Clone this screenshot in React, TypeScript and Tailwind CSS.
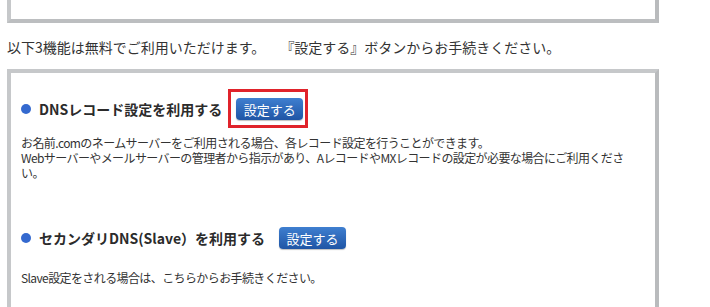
import React from 'react';

const font = { fontFamily: '"Noto Sans CJK JP", "Noto Sans", sans-serif' };

function SetupButton({ highlighted = false }: { highlighted?: boolean }) {
    return (
        <span className="relative inline-flex">
            <button
                type="button"
                className="h-[22px] w-[67px] rounded-[4px] bg-gradient-to-b from-[#3f7fd0] to-[#1f55a5] text-[13px] leading-none text-white shadow-[0_1px_1px_rgba(0,0,0,0.25)]"
            >
                設定する
            </button>
            {highlighted && (
                <span className="pointer-events-none absolute -left-[8px] -right-[5px] -top-[9px] -bottom-[8px] border-[3px] border-[#e0232b]" />
            )}
        </span>
    );
}

function FeatureHeading({ title, highlighted }: { title: string; highlighted?: boolean }) {
    return (
        <div className="flex items-center">
            <span className="h-[10px] w-[10px] shrink-0 rounded-full bg-[#3469cf]" />
            <h3 className="ml-[8px] mr-[14px] text-[14px] font-bold text-[#2b2b2b]">{title}</h3>
            <SetupButton highlighted={highlighted} />
        </div>
    );
}

export default function App() {
    return (
        <div className="h-[307px] w-[710px] overflow-hidden bg-white pl-[7px] text-[#333]" style={font}>
            {/* bottom of the previous panel */}
            <div className="-mt-[10px] h-[33px] w-[652px] border-4 border-[#c6c8ca] border-r-[#b9bbbd] border-b-[#bcbec0] bg-white" />

            <p className="mt-[16px] flex text-[14px] leading-[16px]">
                <span>以下3機能は無料でご利用いただけます。</span>
                <span className="ml-[15px]">『設定する』ボタンからお手続きください。</span>
            </p>

            <div className="mt-[14px] h-[260px] w-[652px] border-4 border-[#c6c8ca] border-r-[#b9bbbd] bg-white pl-[10px] pr-[14px] pt-[25px]">
                <FeatureHeading title="DNSレコード設定を利用する" highlighted />
                <p className="mt-[15px] text-[12px] leading-[15px] tracking-[-0.6px]">
                    お名前.comのネームサーバーをご利用される場合、各レコード設定を行うことができます。
                    <br />
                    Webサーバーやメールサーバーの管理者から指示があり、AレコードやMXレコードの設定が必要な場合にご利用ください。
                </p>

                <div className="mt-[47px]">
                    <FeatureHeading title="セカンダリDNS(Slave）を利用する" />
                </div>
                <p className="mt-[21px] text-[12px] leading-[15px] tracking-[-0.6px]">
                    Slave設定をされる場合は、こちらからお手続きください。
                </p>
            </div>
        </div>
    );
}
